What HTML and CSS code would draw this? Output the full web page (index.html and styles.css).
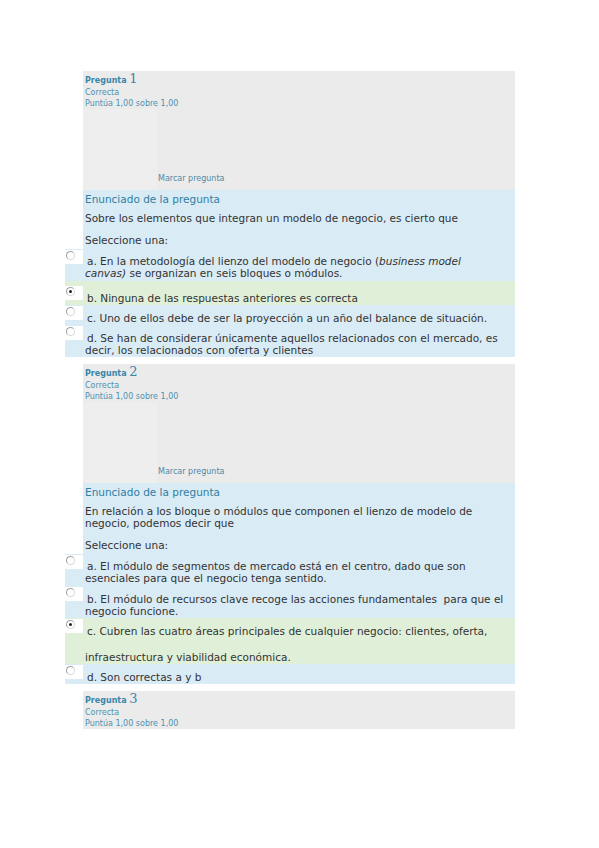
FILE: index.html
```html
<!DOCTYPE html>
<html lang="es">
<head>
<meta charset="utf-8">
<title>Preguntas</title>
<link rel="stylesheet" href="styles.css">
</head>
<body>
<div class="page">

  <section class="que">
    <div class="info">
      <div class="info-head">
        <div class="qno">Pregunta <span class="num">1</span></div>
        <div class="state">Correcta</div>
        <div class="grade">Puntúa 1,00 sobre 1,00</div>
      </div>
      <div class="info-body">
        <div class="info-side"></div>
        <div class="info-main"><span class="flag">Marcar pregunta</span></div>
      </div>
    </div>
    <div class="formulation">
      <div class="qhead">Enunciado de la pregunta</div>
      <div class="qtext">Sobre los elementos que integran un modelo de negocio, es cierto que</div>
      <div class="prompt">Seleccione una:</div>
    </div>
    <div class="answers">
      <div class="opt opt-first"><span class="radio-cell"><span class="radio"></span></span><span class="label">a. En la metodología del lienzo del modelo de negocio (<em>business model<br>canvas)</em> se organizan en seis bloques o módulos.</span></div>
      <div class="opt opt-checked opt-low"><span class="radio-cell"><span class="radio radio-on"></span></span><span class="label">b. Ninguna de las respuestas anteriores es correcta</span></div>
      <div class="opt"><span class="radio-cell"><span class="radio"></span></span><span class="label">c. Uno de ellos debe de ser la proyección a un año del balance de situación.</span></div>
      <div class="opt"><span class="radio-cell"><span class="radio"></span></span><span class="label">d. Se han de considerar únicamente aquellos relacionados con el mercado, es decir, los relacionados con oferta y clientes</span></div>
    </div>
  </section>

  <section class="que">
    <div class="info">
      <div class="info-head">
        <div class="qno">Pregunta <span class="num">2</span></div>
        <div class="state">Correcta</div>
        <div class="grade">Puntúa 1,00 sobre 1,00</div>
      </div>
      <div class="info-body">
        <div class="info-side"></div>
        <div class="info-main"><span class="flag">Marcar pregunta</span></div>
      </div>
    </div>
    <div class="formulation">
      <div class="qhead">Enunciado de la pregunta</div>
      <div class="qtext">En relación a los bloque o módulos que componen el lienzo de modelo de negocio, podemos decir que</div>
      <div class="prompt">Seleccione una:</div>
    </div>
    <div class="answers">
      <div class="opt opt-first"><span class="radio-cell"><span class="radio"></span></span><span class="label">a. El módulo de segmentos de mercado está en el centro, dado que son esenciales para que el negocio tenga sentido.</span></div>
      <div class="opt"><span class="radio-cell"><span class="radio"></span></span><span class="label">b. El módulo de recursos clave recoge las acciones fundamentales&nbsp; para que el negocio funcione.</span></div>
      <div class="opt opt-checked"><span class="radio-cell"><span class="radio radio-on"></span></span><span class="label">c. Cubren las cuatro áreas principales de cualquier negocio: clientes, oferta,<span class="gap"></span>infraestructura y viabilidad económica.</span></div>
      <div class="opt"><span class="radio-cell"><span class="radio"></span></span><span class="label">d. Son correctas a y b</span></div>
    </div>
  </section>

  <section class="que">
    <div class="info info-short">
      <div class="info-head">
        <div class="qno">Pregunta <span class="num">3</span></div>
        <div class="state">Correcta</div>
        <div class="grade">Puntúa 1,00 sobre 1,00</div>
      </div>
    </div>
  </section>

</div>
</body>
</html>
```
FILE: styles.css
```css
html, body {
  margin: 0;
  padding: 0;
  background: #ffffff;
}

body {
  font-family: "DejaVu Sans", Verdana, sans-serif;
  color: #333333;
}

.page {
  padding-top: 71px;
  margin-left: 83px;
  width: 432px;
}

.que {
  margin-bottom: 7px;
}

/* info header */
.info {
  background: #ebebeb;
  height: 119px;
  display: flex;
  flex-direction: column;
}

.info-short {
  height: auto;
}

.info-head {
  padding: 2px 2px 0;
}

.qno {
  font-size: 8px;
  font-weight: bold;
  line-height: 12px;
  color: #3a86a8;
}

.num {
  font-family: "DejaVu Serif", "Liberation Serif", serif;
  font-weight: normal;
  font-size: 13px;
  color: #3a86a8;
}

.state,
.grade {
  font-size: 8px;
  line-height: 11px;
  color: #4d92b2;
}

.info-body {
  flex: 1;
  display: flex;
}

.info-side {
  width: 74px;
  background: #eeeeee;
}

.info-main {
  flex: 1;
  display: flex;
  align-items: flex-end;
  padding: 0 0 6px 1px;
}

.flag {
  font-size: 8px;
  line-height: 11px;
  color: #4f8aa6;
}

/* formulation */
.formulation {
  background: #d9ebf5;
  padding: 2px 2px 3px;
  font-size: 10.5px;
}

.qhead {
  font-size: 10.5px;
  line-height: 14px;
  color: #2f7fa3;
}

.qtext {
  margin-top: 6px;
  line-height: 12px;
}

.prompt {
  margin-top: 10px;
  line-height: 12px;
}

/* answers */
.answers {
  margin-left: -18px;
  font-size: 10.5px;
}

.opt {
  display: flex;
  align-items: flex-start;
  background: #d9ebf5;
  padding: 1px 0 1px;
}

.opt-first .label {
  padding-top: 5px;
}

.opt-first {
  padding-bottom: 2px;
}

.opt-checked {
  background: #e0efd8;
}

.opt-low {
  padding-top: 5px;
}

.radio-cell {
  flex: none;
  width: 18px;
  height: 14px;
  background: #ffffff;
  padding-top: 1px;
  box-sizing: border-box;
  padding-left: 1px;
}

.radio {
  display: block;
  width: 9px;
  height: 9px;
  box-sizing: border-box;
  border-radius: 50%;
  border: 1px solid #a0a0a0;
  border-right-color: #d8d8d8;
  border-bottom-color: #d8d8d8;
  background: #ffffff;
  position: relative;
}

.radio-on::after {
  content: "";
  position: absolute;
  left: 2px;
  top: 2px;
  width: 3px;
  height: 3px;
  border-radius: 50%;
  background: #222222;
}

.label {
  flex: 1;
  padding: 6px 0 0 2px;
  line-height: 12px;
  text-indent: 2px;
}

.gap {
  display: block;
  height: 14px;
}
```
